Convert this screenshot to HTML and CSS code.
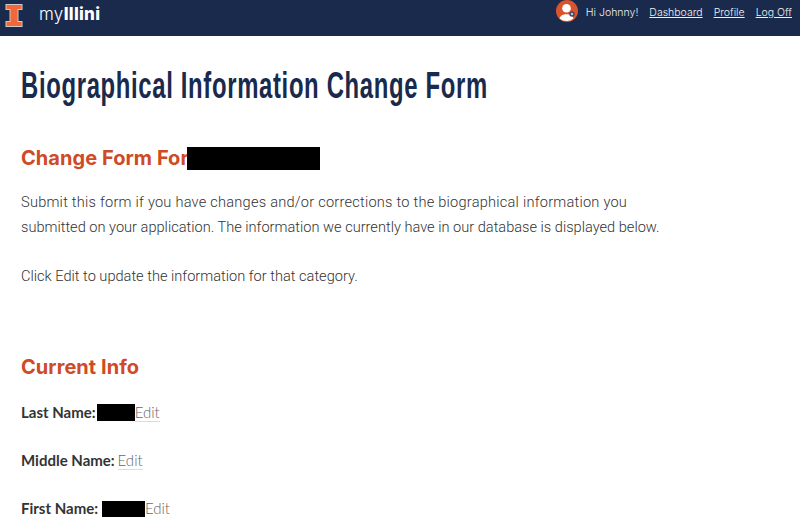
FILE: index.html
```html
<!DOCTYPE html>
<html lang="en">
<head>
<meta charset="utf-8">
<title>Biographical Information Change Form</title>
<link rel="stylesheet" href="styles.css">
</head>
<body>
<header class="topbar">
  <div class="brand">
    <svg class="logo" viewBox="0 0 18 23" width="18" height="23" aria-hidden="true">
      <path d="M.5 0H17.500V6H13.500V17H17.500V23H.5V17H4.500V6H.5Z" fill="#cfc9c6"/>
      <path d="M1.500 1H16.500V5H12.500V18H16.500V22H1.500V18H5.500V5H1.500Z" fill="#f0683a"/>
    </svg>
    <span class="brand-name">my<b>Illini</b></span>
  </div>
  <nav class="usernav">
    <svg class="avatar" viewBox="0 0 22 22" width="22" height="22" aria-hidden="true">
      <circle cx="11" cy="11" r="11" fill="#d9542c"/>
      <path d="M3.500 18.500C4.500 15 7.500 14.200 10.500 14.200S16.500 15 17.500 18.500A11 11 0 0 1 3.500 18.500Z" fill="#fff"/>
      <circle cx="10.500" cy="8.300" r="4.300" fill="#fff"/>
      <circle cx="16" cy="14" r="2.700" fill="#3c4a68"/>
      <path d="M14.800 14H17.200M16 12.800V15.200" stroke="#fff" stroke-width=".8"/>
    </svg>
    <span class="greeting">Hi Johnny!</span>
    <a href="#">Dashboard</a>
    <a href="#">Profile</a>
    <a href="#">Log Off</a>
  </nav>
</header>
<main class="content">
  <h1>Biographical Information Change Form</h1>
  <h2 class="form-for">Change Form For<span class="redact redact-name"></span></h2>
  <p>Submit this form if you have changes and/or corrections to the biographical information you<br>submitted on your application. The information we currently have in our database is displayed below.</p>
  <p class="hint">Click Edit to update the information for that category.</p>
  <h2 class="current">Current Info</h2>
  <div class="field"><b>Last Name:</b><span class="redact redact-last"></span><a href="#">Edit</a></div>
  <div class="field"><b>Middle Name:</b> <a class="edit-near" href="#">Edit</a></div>
  <div class="field"><b>First Name:</b> <span class="redact redact-first"></span><a href="#">Edit</a></div>
</main>
</body>
</html>
```
FILE: styles.css
```css
* { box-sizing: border-box; }
html, body { margin: 0; height: 100%; overflow: hidden; }
body { background: #fff; font-family: "Roboto", sans-serif; color: #333; }
.topbar {
  height: 36px;
  background: #192a4d;
  display: flex;
  justify-content: space-between;
  align-items: flex-start;
  padding: 0 8px 0 5px;
}
.brand { display: flex; align-items: center; gap: 16px; height: 27px; }
.logo { display: block; margin-top: 4px; }
.brand-name { color: #fff; font-family: "Inter", sans-serif; font-size: 17px; font-weight: 300; letter-spacing: .3px; }
.brand-name b { font-weight: 800; }
.usernav { display: flex; align-items: center; height: 25px; font-family: "Inter", sans-serif; font-size: 10.500px; font-weight: 300; color: #f0f0f0; }
.avatar { margin: 0 8px 3px 0; }
.greeting { margin-right: 11px; }
.usernav a { color: #f0f0f0; margin-right: 11px; }
.usernav a:last-child { margin-right: 0; }
.content { padding: 0 21px; }
h1 {
  font-family: "Liberation Sans", sans-serif;
  font-weight: 700;
  font-size: 36px;
  line-height: 44px;
  letter-spacing: 1px;
  color: #192a4d;
  margin: 28px 0 0;
  white-space: nowrap;
  transform: scaleX(.663);
  transform-origin: left center;
}
h2 {
  font-family: "Inter", sans-serif;
  font-size: 20px;
  font-weight: 700;
  letter-spacing: .05px;
  color: #cf4a26;
  margin: 0;
  line-height: 24px;
}
.form-for { margin-top: 38px; display: flex; align-items: center; }
.redact { display: inline-block; background: #000; }
.redact-name { width: 133px; height: 23px; margin-left: -2px; }
p { font-size: 14.600px; line-height: 25px; font-weight: 300; margin: 20px 0 0; white-space: nowrap; }
p::first-line { letter-spacing: .23px; }
p.hint { margin-top: 24px; }
p.hint::first-line { letter-spacing: 0; }
.current { margin-top: 66px; }
.field { font-size: 15px; line-height: 22px; margin-top: 26px; color: #333; font-family: "Lato", sans-serif; }
.current + .field { margin-top: 22px; }
.field b { font-weight: 700; }
.field a { color: #666; font-weight: 300; text-decoration: none; border-bottom: 1px solid #ddd; }
.field .edit-near { margin-left: -1px; }
.redact-last { width: 38px; height: 17px; vertical-align: -3px; margin-left: 1px; }
.redact-first { width: 43px; height: 16px; vertical-align: -3px; }
```
